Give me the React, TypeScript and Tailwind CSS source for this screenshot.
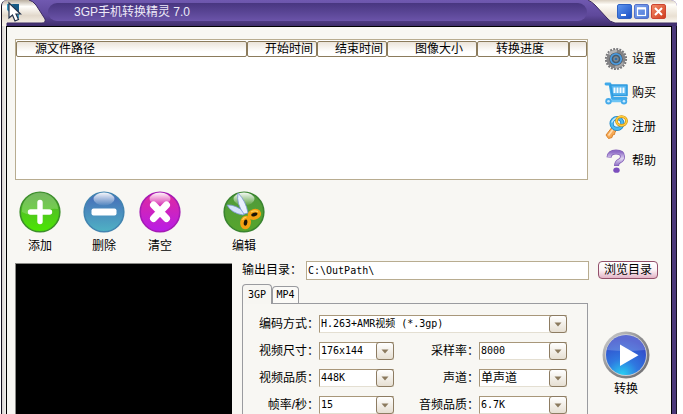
import { useState } from 'react';
import type { ReactNode } from 'react';

const columns = [
  { title: '源文件路径', className: 'pl-[18px] text-left' },
  { title: '开始时间', className: 'w-[70px] pr-[3px] text-right' },
  { title: '结束时间', className: 'w-[70px] pr-[3px] text-right' },
  { title: '图像大小', className: 'w-[90px] pr-[13px] text-right' },
  { title: '转换进度', className: 'w-[92px] pl-[18px] text-left' },
  { title: '', className: 'w-[18px]' },
];

function AppLogo() {
  return (
    <svg width="46" height="26" viewBox="0 0 46 26" className="shrink-0">
      <defs>
        <linearGradient id="tabL" x1="0" y1="0" x2="0" y2="1">
          <stop offset="0" stopColor="#b9ae9f" />
          <stop offset="0.25" stopColor="#fffefb" />
          <stop offset="0.6" stopColor="#e2d8cb" />
          <stop offset="1" stopColor="#fbf6ee" />
        </linearGradient>
      </defs>
      <path d="M0 26V5Q0 0 6 0H27Q31 1 34 5L43 19Q44 23 40 23H5V26Z" fill="url(#tabL)" />
      <path d="M27 0Q31 1 34 5L43 19Q44 23 40 23H5V26" fill="none" stroke="#3b2b62" />
      <path d="M5 4H17V18H14L5 10Z" fill="#3a9ac4" />
      <path d="M10 4H17V14Z" fill="#175a86" />
      <path d="M7 3V18L10.500 15L13 21L16.500 19.500L14 14H18.500Z" fill="#fff" stroke="#25324a" strokeWidth="1.200" />
    </svg>
  );
}

function WindowButton({ label, tone, children }: { label: string; tone: string; children: ReactNode }) {
  return (
    <button aria-label={label} className={`flex size-[15px] items-center justify-center rounded-[2px] ${tone}`}>
      <svg width="13" height="13" viewBox="0 0 13 13" fill="none" stroke="#fff" strokeWidth="2">
        {children}
      </svg>
    </button>
  );
}

function TitleBar() {
  return (
    <header className="flex h-[26px] shrink-0 bg-linear-to-b from-[#7059b0] via-[#5e489a] via-60% to-[#3f2e6c]">
      <AppLogo />
      <div className="mt-[3px] flex h-[18px] flex-1 items-center rounded-full bg-linear-to-b from-[#483680] to-[#6b54a9] pl-[26px]">
        <h1 className="text-xs leading-[18px] text-[#eeeaf8]">3GP手机转换精灵 7.0</h1>
      </div>
      <div className="relative flex w-[90px] shrink-0 justify-end gap-[2px] pt-1 pr-[11px]">
        <svg width="90" height="24" viewBox="0 0 90 24" className="absolute top-0 left-0">
          <defs>
            <linearGradient id="tabR" x1="0" y1="0" x2="0" y2="1">
              <stop offset="0" stopColor="#d9cfc0" />
              <stop offset="0.200" stopColor="#fffdf8" />
              <stop offset="0.700" stopColor="#e9e0d3" />
              <stop offset="1" stopColor="#fbf8f1" />
            </linearGradient>
          </defs>
          <path d="M1 0H84Q90 0 90 6V23H28Q23 22 20 18L8 5Q5 2 1 0Z" fill="url(#tabR)" />
          <path d="M1 0Q5 2 8 5L20 18Q23 22 28 23H90" fill="none" stroke="#3a2a5e" />
          <path d="M84 0H90V6Q90 0 84 0Z" fill="#fff" />
        </svg>
        <WindowButton label="最小化" tone="relative border border-[#2f62c4] bg-linear-to-br from-[#5f95ee] to-[#1b50c4]">
          <path d="M3 10H8" />
        </WindowButton>
        <WindowButton label="最大化" tone="relative border border-[#5570c8] bg-linear-to-br from-[#7fa4ee] to-[#4d78d6]">
          <rect x="2.500" y="3" width="8" height="7.500" strokeWidth="1.200" />
          <path d="M2 3.500H11" />
        </WindowButton>
        <WindowButton label="关闭" tone="relative border border-[#cc4430] bg-linear-to-br from-[#f28a66] to-[#d03a1a]">
          <path d="M3 3L10 10M10 3L3 10" />
        </WindowButton>
      </div>
    </header>
  );
}

function GearIcon() {
  return (
    <svg width="24" height="24" viewBox="0 0 24 24">
      <circle cx="12" cy="12" r="10" fill="none" stroke="#77777a" strokeWidth="2.200" strokeDasharray="1.900 1.241" />
      <circle cx="12" cy="12" r="9.600" fill="#848486" />
      <path d="M4 7Q7 2.500 13 3L12 12Z" fill="#b4b4b6" />
      <path d="M20 16Q17 21 11 21L12 12Z" fill="#a9a9aa" />
      <circle cx="12" cy="12" r="6.600" fill="#4d555c" />
      <circle cx="12" cy="12" r="5.200" fill="none" stroke="#4a9be0" strokeWidth="1.800" />
      <circle cx="12" cy="12" r="3.400" fill="#7f8a92" stroke="#3a5770" />
      <circle cx="12" cy="12" r="1.300" fill="#2c6fb0" />
    </svg>
  );
}

function CartIcon() {
  return (
    <svg width="24" height="24" viewBox="0 0 24 24">
      <path d="M2 3H6L8.500 17.500H22" fill="none" stroke="#3fa9ea" strokeWidth="2.800" strokeLinecap="round" strokeLinejoin="round" />
      <path d="M6.500 4H23V14.500H8.500Z" fill="#56b6f0" stroke="#2f9bde" strokeWidth="1.600" strokeLinejoin="round" />
      <path d="M10.500 6.500V12M13.500 6.500V12M16.500 6.500V12M19.500 6.500V12" stroke="#f4fbff" strokeWidth="2" />
      <path d="M4 20H22" stroke="#6cc4f4" strokeWidth="2.600" />
      <circle cx="4.500" cy="20.300" r="3.200" fill="#46abea" />
      <circle cx="20" cy="20.300" r="3.200" fill="#46abea" />
      <circle cx="4.500" cy="20.300" r="1.300" fill="#c9eaff" />
      <circle cx="20" cy="20.300" r="1.300" fill="#c9eaff" />
    </svg>
  );
}

function KeyIcon() {
  return (
    <svg width="24" height="24" viewBox="0 0 24 24">
      <path d="M9 11L2 20L4.500 23.500L8 22.500L8.500 20L10.500 19.500L11 17L14 14Z" fill="#f6a955" stroke="#d9832c" strokeLinejoin="round" />
      <path d="M10 13L4.500 20.500" stroke="#ffdcae" strokeWidth="1.600" />
      <circle cx="13" cy="8.500" r="5.400" fill="#e9f6fd" stroke="#1d86c8" strokeWidth="4.200" />
      <circle cx="13" cy="8.500" r="5.400" fill="none" stroke="#4cb9f0" strokeWidth="2.600" />
      <path d="M8 7Q9.500 3.500 13 3" fill="none" stroke="#bfe8ff" strokeWidth="1.400" strokeLinecap="round" />
      <ellipse cx="17.500" cy="6" rx="5" ry="4.400" fill="none" stroke="#d2910f" strokeWidth="2.800" />
      <ellipse cx="17.500" cy="6" rx="5" ry="4.400" fill="none" stroke="#ffcf3f" strokeWidth="1.500" />
    </svg>
  );
}

function HelpIcon() {
  return (
    <svg width="24" height="24" viewBox="0 0 24 24">
      <defs>
        <linearGradient id="help" x1="0" y1="0" x2="0" y2="1">
          <stop offset="0" stopColor="#8e6cc6" />
          <stop offset="0.5" stopColor="#e0d5f1" />
          <stop offset="1" stopColor="#8f70c4" />
        </linearGradient>
      </defs>
      <path d="M5 8.500Q5.500 3 12 3Q18.500 3 18.500 7.500Q18.500 10.500 15.500 12Q12.500 13.500 12.500 17" fill="none" stroke="#8460b8" strokeWidth="5" />
      <path d="M5 8Q5.500 3 12 3Q18.500 3 18.500 7.500Q18.500 10.500 15.500 12Q12.500 13.500 12.500 16.500" fill="none" stroke="url(#help)" strokeWidth="3.400" />
      <ellipse cx="12.500" cy="21.200" rx="3.200" ry="2.600" fill="#7c4fbd" />
    </svg>
  );
}

const sideLinks = [
  { label: '设置', icon: <GearIcon /> },
  { label: '购买', icon: <CartIcon /> },
  { label: '注册', icon: <KeyIcon /> },
  { label: '帮助', icon: <HelpIcon /> },
];

interface OrbProps {
  id: string;
  top: string;
  bottom: string;
  rim: string;
  children: ReactNode;
}

function Orb({ id, top, bottom, rim, children }: OrbProps) {
  return (
    <svg width="42" height="42" viewBox="0 0 42 42">
      <defs>
        <linearGradient id={id} x1="0" y1="0" x2="0" y2="1">
          <stop offset="0" stopColor={top} />
          <stop offset="1" stopColor={bottom} />
        </linearGradient>
        <linearGradient id={`${id}-shine`} x1="0" y1="0" x2="0" y2="1">
          <stop offset="0" stopColor="#fff" stopOpacity="0.950" />
          <stop offset="1" stopColor="#fff" stopOpacity="0.050" />
        </linearGradient>
      </defs>
      <circle cx="21" cy="21" r="19.800" fill={`url(#${id})`} stroke={rim} strokeWidth="1.600" />
      {id === 'add' ? (
        <path d="M3 21A18 18 0 0 1 39 18Q28 17 20 22Q11 26 3 21Z" fill="#fff" opacity="0.200" />
      ) : (
        <ellipse cx="21" cy="8" rx="10.500" ry="6.500" fill={`url(#${id}-shine)`} />
      )}
      {children}
    </svg>
  );
}

const actions = [
  {
    label: '添加',
    gap: '',
    icon: (
      <Orb id="add" top="#55a53c" bottom="#4be800" rim="#3c8f2a">
        <path d="M21 11.500V30.500M11.500 21H30.500" stroke="#fff" strokeWidth="5.400" strokeLinecap="round" />
      </Orb>
    ),
  },
  {
    label: '删除',
    gap: 'ml-[22px]',
    icon: (
      <Orb id="remove" top="#4668b8" bottom="#4fb2c4" rim="#4284b0">
        <rect x="8.500" y="17.500" width="25" height="7" rx="2" fill="#fff" />
      </Orb>
    ),
  },
  {
    label: '清空',
    gap: 'ml-[14px]',
    icon: (
      <Orb id="clear" top="#e02a9c" bottom="#b81ce8" rim="#a51bb4">
        <path d="M14.500 14L27.500 27.500M27.500 14L14.500 27.500" stroke="#fff" strokeWidth="7" strokeLinecap="round" />
      </Orb>
    ),
  },
  {
    label: '编辑',
    gap: 'ml-[42px]',
    icon: (
      <Orb id="edit" top="#4f9a3c" bottom="#57a52c" rim="#3a8430">
        <path d="M4 14Q12 13 23 22L20 24Q8 22 4 14Z" fill="#d5e3fb" stroke="#7893d2" strokeWidth="0.800" />
        <path d="M15 2Q23 10 25 22L21 23Q13 13 15 2Z" fill="#e9f0ff" stroke="#7893d2" strokeWidth="0.800" />
        <ellipse cx="31.500" cy="23.500" rx="5" ry="3.600" fill="#1c1608" stroke="#f5a212" strokeWidth="3.600" transform="rotate(-15 31 24)" />
        <ellipse cx="22.500" cy="31.500" rx="3.600" ry="5" fill="#1c1608" stroke="#f5a212" strokeWidth="3.600" transform="rotate(8 22 32)" />
        <path d="M28 21Q31 19 35 20.500M19.500 29Q20.500 26.500 23.500 26" fill="none" stroke="#ffd45c" strokeWidth="1.200" />
      </Orb>
    ),
  },
];

function PlayIcon() {
  return (
    <svg width="48" height="48" viewBox="0 0 48 48">
      <defs>
        <linearGradient id="ring" x1="0" y1="0" x2="1" y2="1">
          <stop offset="0" stopColor="#d6d6d6" />
          <stop offset="0.5" stopColor="#8b8b8d" />
          <stop offset="1" stopColor="#6c6c70" />
        </linearGradient>
        <radialGradient id="play" cx="0.400" cy="1" r="0.900">
          <stop offset="0" stopColor="#27d2f2" />
          <stop offset="0.450" stopColor="#2f78e0" />
          <stop offset="1" stopColor="#3347c8" />
        </radialGradient>
      </defs>
      <circle cx="24" cy="24" r="23.500" fill="url(#ring)" />
      <circle cx="24" cy="24" r="21" fill="#c9cbd2" />
      <circle cx="24" cy="24" r="20" fill="url(#play)" />
      <path d="M5 19A19.500 19.500 0 0 1 43 19Q24 21 5 19Z" fill="#fff" opacity="0.200" />
      <path d="M18 13.500V35L36.500 24.200Z" fill="#fff" />
    </svg>
  );
}

interface FieldProps {
  id: string;
  label: string;
  options: string[];
  wide?: boolean;
  size?: string;
}

function Field({ id, label, options, wide, size = 'text-[10px]' }: FieldProps) {
  return (
    <>
      <label htmlFor={id} className="text-right leading-[18px]">
        {label}：
      </label>
      <div className={`relative h-[18px] ${wide ? 'col-span-3' : ''}`}>
        <select
          id={id}
          className={`block h-[18px] w-full appearance-none border border-[#e4dfd2] border-t-[#a8977a] border-l-[#a8977a] bg-white pr-5 pl-[1px] font-['DejaVu_Sans_Mono','Noto_Sans_CJK_SC',monospace] leading-4 ${size}`}
        >
          {options.map((option) => (
            <option key={option}>{option}</option>
          ))}
        </select>
        <span className="pointer-events-none absolute top-0 right-0 flex size-[18px] items-center justify-center rounded-[3px] border border-[#8d7c62] bg-linear-to-b from-white to-[#e6dfd2]">
          <svg width="8" height="5" viewBox="0 0 8 5">
            <path d="M0.500 0.500H7.500L4 4.500Z" fill="#8b7a5e" />
          </svg>
        </span>
      </div>
    </>
  );
}

function FormatPanel() {
  const [tab, setTab] = useState('3GP');

  return (
    <section className="flex min-w-0 flex-1 flex-col">
      <div role="tablist" className="flex items-end font-['DejaVu_Sans_Mono',monospace] text-[10px]">
        {['3GP', 'MP4'].map((name) => (
          <button
            key={name}
            role="tab"
            aria-selected={tab === name}
            onClick={() => setTab(name)}
            className={`rounded-t-[4px] border border-b-0 border-[#9a9b9f] ${
              tab === name ? 'relative -mb-px h-5 w-[30px] bg-[#f7f6f2]' : 'h-[17px] w-[27px] bg-[#fbfaf7]'
            }`}
          >
            {name}
          </button>
        ))}
      </div>
      <div className="grid flex-1 grid-cols-[76px_75px_1fr_88px] content-start gap-y-[9px] border border-b-0 border-[#9a9b9f] pt-[11px] pr-5">
        <Field id="codec" label="编码方式" options={['H.263+AMR视频 (*.3gp)', 'MPEG4+AMR视频 (*.3gp)']} wide />
        <Field id="size" label="视频尺寸" options={['176x144', '320x240']} />
        <Field id="rate" label="采样率" options={['8000', '16000']} />
        <Field id="quality" label="视频品质" options={['448K', '256K']} />
        <Field id="channel" label="声道" options={['单声道', '立体声']} size="text-xs" />
        <Field id="fps" label="帧率/秒" options={['15', '25']} />
        <Field id="audio" label="音频品质" options={['6.7K', '12.2K']} />
      </div>
    </section>
  );
}

export default function App() {
  return (
    <div className="h-screen overflow-hidden bg-white pr-[6px] pl-px font-['Liberation_Sans','Noto_Sans_CJK_SC',sans-serif] text-xs text-black">
      <div className="flex h-full flex-col overflow-hidden rounded-t-[6px] border-l border-[#15101f]">
        <TitleBar />
        <div className="flex min-h-0 flex-1 border-r border-[#15101f] bg-[#4a3879] pr-1">
          <div className="w-1 shrink-0 bg-linear-to-r from-[#d8d4d2] to-[#f2efec]" />
          <main className="flex min-w-0 flex-1 flex-col border border-b-0 border-black bg-[#f8f7f3] pl-2">
            <div className="flex pt-3">
              <div className="h-[141px] min-w-0 flex-1 border border-[#b8ac90] bg-white pt-px">
                <table className="w-full table-fixed border-separate border-spacing-0">
                  <thead>
                    <tr>
                      {columns.map((col) => (
                        <th
                          key={col.title}
                          className={`h-4 rounded-[2px] border border-[#8b7b5c] bg-linear-to-b from-[#ebe4da] to-white to-70% py-0 leading-[14px] font-normal ${col.className}`}
                        >
                          {col.title}
                        </th>
                      ))}
                    </tr>
                  </thead>
                </table>
              </div>
              <nav className="flex w-[83px] shrink-0 flex-col gap-[10px] pt-2 pl-4">
                {sideLinks.map(({ label, icon }) => (
                  <button key={label} className="flex h-6 items-center gap-1">
                    {icon}
                    {label}
                  </button>
                ))}
              </nav>
            </div>

            <div className="flex pt-[11px] pl-1">
              {actions.map(({ label, gap, icon }) => (
                <button key={label} className={`flex flex-col items-center gap-[5px] leading-4 ${gap}`}>
                  {icon}
                  {label}
                </button>
              ))}
            </div>

            <div className="mt-[7px] flex min-h-0 flex-1 gap-[10px]">
              <div className="mt-[2px] w-[217px] shrink-0 border-t border-l border-[#8a8a86] bg-black" />
              <div className="flex min-w-0 flex-1 flex-col gap-[5px]">
                <div className="flex h-[18px] shrink-0 items-center pr-[13px]">
                  <label htmlFor="output" className="w-16 leading-[18px]">
                    输出目录：
                  </label>
                  <input
                    id="output"
                    defaultValue="C:\OutPath\"
                    className="h-[19px] min-w-0 flex-1 border border-[#b8ac90] bg-white px-px font-['DejaVu_Sans_Mono',monospace] text-[10px]"
                  />
                  <button className="ml-[9px] h-[18px] w-[60px] rounded-[4px] border border-[#93506a] bg-linear-to-b from-white via-[#fbf3f6] to-[#e3b4c6] leading-4">
                    浏览目录
                  </button>
                </div>
                <div className="flex min-h-0 flex-1">
                  <FormatPanel />
                  <div className="w-[83px] shrink-0 pt-[47px] pl-[14px]">
                    <button className="flex flex-col items-center gap-[2px] leading-4">
                      <PlayIcon />
                      转换
                    </button>
                  </div>
                </div>
              </div>
            </div>
          </main>
        </div>
      </div>
    </div>
  );
}
